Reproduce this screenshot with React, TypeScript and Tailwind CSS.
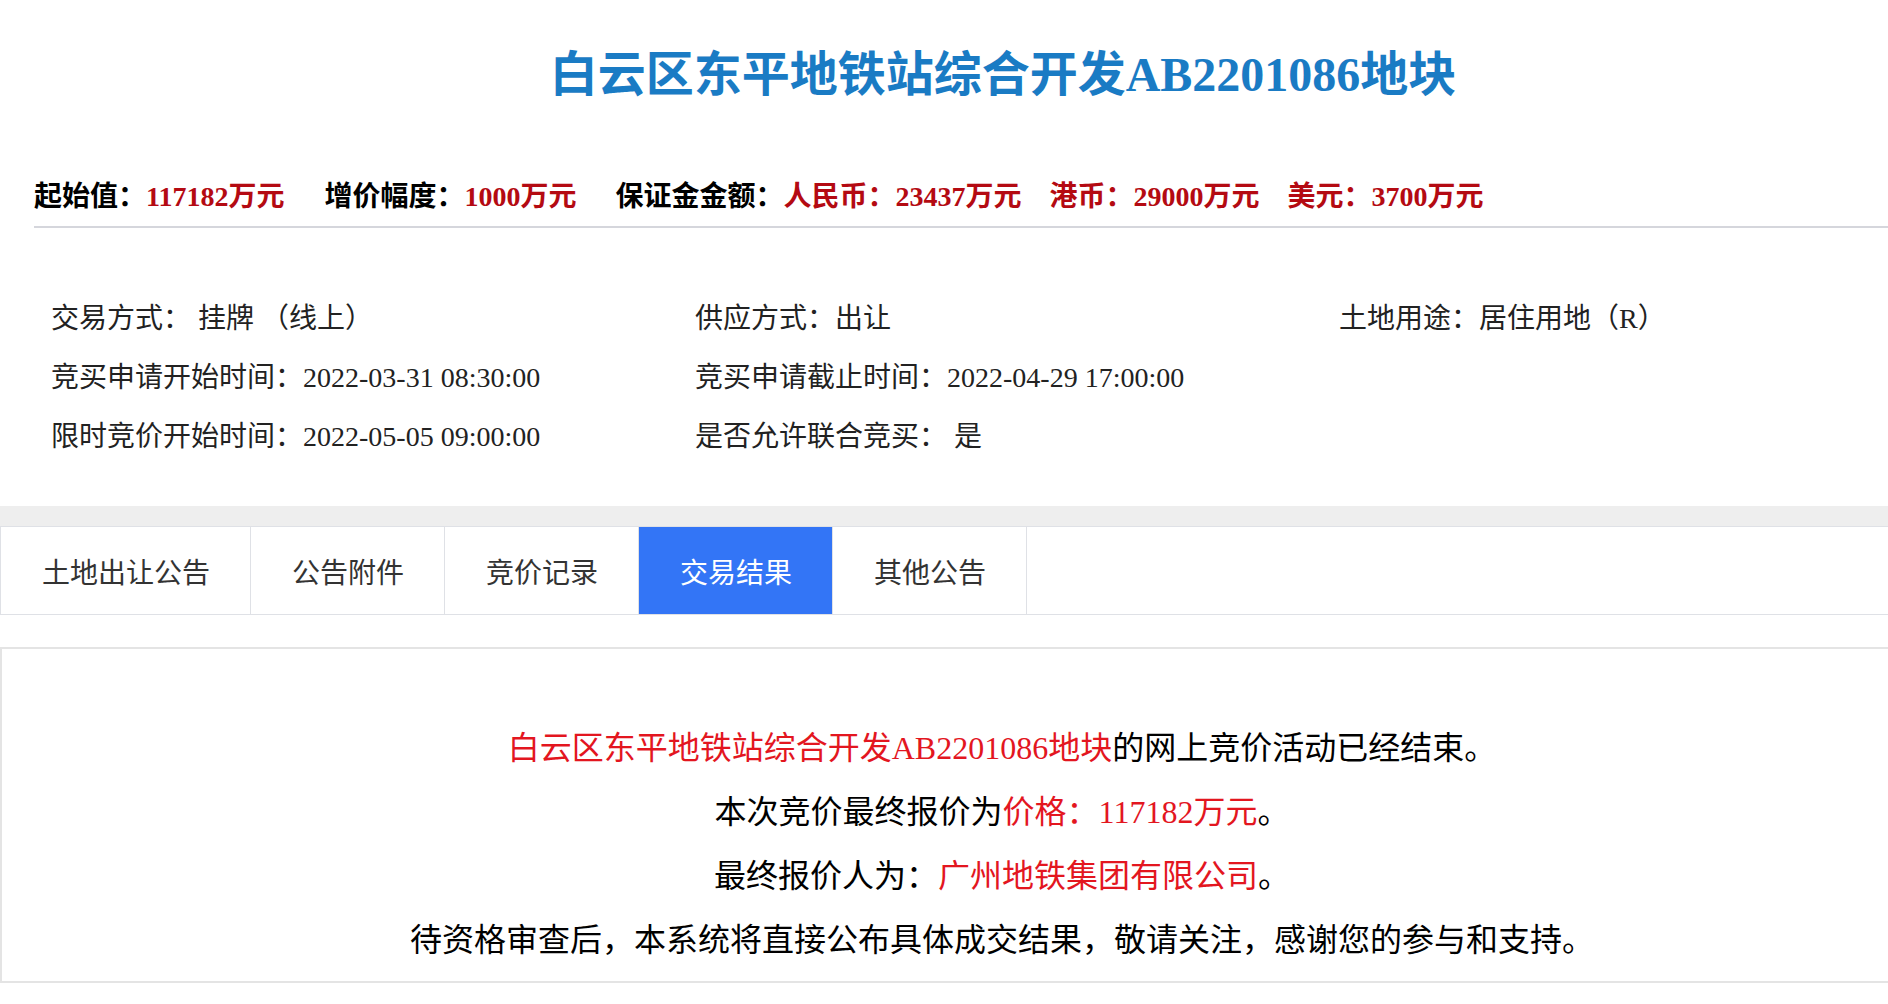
import React, { useState } from "react";

const serif = { fontFamily: '"Liberation Serif", "Noto Sans CJK SC", serif' };

const tabs = ["土地出让公告", "公告附件", "竞价记录", "交易结果", "其他公告"];

// --- header summary row ---
const InfoRow = () => (
  <div className="ml-[34px] flex items-center h-[40px] mb-[9px] text-[28px] font-bold leading-[40px] text-black whitespace-nowrap">
    <span>起始值：</span>
    <span className="text-[#b40a12]">117182万元</span>
    <span className="ml-[40px]">增价幅度：</span>
    <span className="text-[#b40a12]">1000万元</span>
    <span className="ml-[39px]">保证金金额：</span>
    <span className="text-[#b40a12]">人民币：23437万元</span>
    <span className="ml-[28px] text-[#b40a12]">港币：29000万元</span>
    <span className="ml-[28px] text-[#b40a12]">美元：3700万元</span>
  </div>
);

const details = [
  ["交易方式：", " 挂牌 （线上）"],
  ["供应方式：", "出让"],
  ["土地用途：", "居住用地（R）"],
  ["竞买申请开始时间：", "2022-03-31 08:30:00"],
  ["竞买申请截止时间：", "2022-04-29 17:00:00"],
  ["", ""],
  ["限时竞价开始时间：", "2022-05-05 09:00:00"],
  ["是否允许联合竞买：", " 是"],
  ["", ""],
];

export default function App() {
  const [active, setActive] = useState(3);

  return (
    <div className="w-[1888px] h-[1004px] overflow-hidden bg-white" style={serif}>
      <div className="w-[1990px]">
        <h1 className="pt-[47px] pl-[16px] text-center text-[48px] leading-[56px] font-bold text-[#1a7bc4]">
          白云区东平地铁站综合开发AB2201086地块
        </h1>

        <div className="mt-[74px]">
          <InfoRow />
          <div className="ml-[34px] h-[2px] bg-[#d5d6dc]" />
        </div>

        <div className="mt-[61px] ml-[51px] grid grid-cols-[644px_644px_644px] text-[28px] text-[#222]">
          {details.map(([k, v], i) => (
            <div key={i} className="h-[59px] leading-[59px] whitespace-pre">
              {k}
              {v}
            </div>
          ))}
        </div>

        <div className="mt-[40px] h-[20px] bg-[#eeeeee]" />

        <div
          className="flex border-t border-b border-[#dfe1e6]"
          style={{ fontFamily: '"Noto Sans CJK SC", sans-serif' }}
        >
          {tabs.map((t, i) => (
            <button
              key={t}
              onClick={() => setActive(i)}
              className={`h-[87px] pl-[41px] pr-[40px] border-l border-[#dfe1e6] text-[28px] leading-none ${
                i === active ? "bg-[#3375f6] text-white" : "bg-white text-[#333]"
              } ${i === tabs.length - 1 ? "border-r" : ""}`}
            >
              {t}
            </button>
          ))}
        </div>

        <div className="mt-[32px] border-2 border-[#e4e4e4] pt-[67px] pb-[9px] pl-[14px] text-center text-[32px] leading-[64px] text-black">
          <p>
            <span className="text-[#e3161f]">白云区东平地铁站综合开发AB2201086地块</span>
            的网上竞价活动已经结束。
          </p>
          <p>
            本次竞价最终报价为<span className="text-[#e3161f]">价格：117182万元</span>。
          </p>
          <p>
            最终报价人为：<span className="text-[#e3161f]">广州地铁集团有限公司</span>。
          </p>
          <p>待资格审查后，本系统将直接公布具体成交结果，敬请关注，感谢您的参与和支持。</p>
        </div>
      </div>
    </div>
  );
}
